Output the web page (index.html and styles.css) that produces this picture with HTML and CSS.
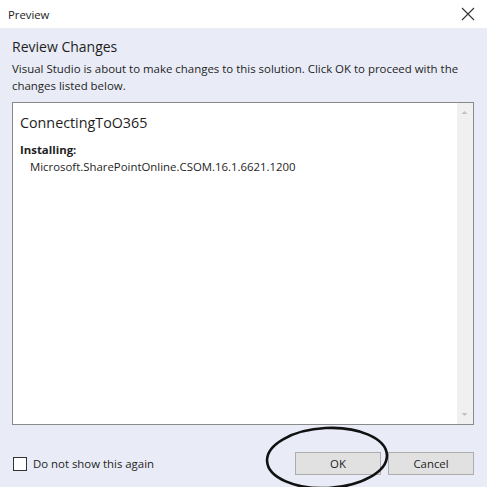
FILE: index.html
```html
<!DOCTYPE html>
<html>
<head>
<meta charset="utf-8">
<link rel="stylesheet" href="styles.css">
</head>
<body>
<div class="dialog">
  <div class="titlebar">
    <span class="title">Preview</span>
    <svg class="close" width="14" height="14" viewBox="0 0 14 14"><path d="M1 1L13 13M13 1L1 13" stroke="#333" stroke-width="1.1" fill="none"/></svg>
  </div>
  <div class="body">
    <h1 class="heading">Review Changes</h1>
    <p class="desc">Visual Studio is about to make changes to this solution. Click OK to proceed with the changes listed below.</p>
    <div class="listbox">
      <div class="content">
        <div class="project">ConnectingToO365</div>
        <div class="label">Installing:</div>
        <div class="item">Microsoft.SharePointOnline.CSOM.16.1.6621.1200</div>
      </div>
      <div class="scrollbar">
        <svg width="15" height="10" viewBox="0 0 15 10"><path d="M4.5 7L7.5 4L10.5 7Z" fill="#c2c2c2"/></svg>
        <svg width="15" height="10" viewBox="0 0 15 10"><path d="M4.5 3L7.5 6L10.5 3Z" fill="#c2c2c2"/></svg>
      </div>
    </div>
    <div class="footer">
      <label class="check"><span class="box"></span><span>Do not show this again</span></label>
      <div class="buttons">
        <button class="btn">OK</button>
        <button class="btn">Cancel</button>
      </div>
    </div>
  </div>
  <svg class="circle" width="130" height="70" viewBox="0 0 130 70"><ellipse cx="64" cy="35" rx="60" ry="30" transform="rotate(-3 64 35)" fill="none" stroke="#111" stroke-width="2.6"/></svg>
</div>
</body>
</html>
```
FILE: styles.css
```css
* { box-sizing: border-box; }
html, body { margin: 0; padding: 0; }
body {
  width: 487px;
  height: 487px;
  overflow: hidden;
  font-family: "Open Sans", "Noto Sans", sans-serif;
  color: #1e1e1e;
  background: #e9ecf6;
}
.dialog {
  position: relative;
  width: 487px;
  height: 487px;
  display: flex;
  flex-direction: column;
}
.titlebar {
  height: 28px;
  background: #ffffff;
  display: flex;
  align-items: center;
  justify-content: space-between;
  padding: 0 12px 0 8px;
}
.title { font-size: 11.3px; color: #222; }
.close { display: block; }
.body {
  flex: 1;
  display: flex;
  flex-direction: column;
  padding: 9px 13px 0 12px;
}
.heading {
  margin: 0;
  font-size: 14px;
  font-weight: 400;
  line-height: 20px;
  color: #1e1e1e;
}
.desc {
  margin: 3px 0 0 0;
  font-size: 11.45px;
  line-height: 17px;
  color: #1e1e1e;
}
.listbox {
  margin-top: 8px;
  height: 323px;
  background: #fff;
  border: 1px solid #8a8a8a;
  display: flex;
}
.content {
  flex: 1;
  padding: 10px 7px 7px;
}
.project { font-size: 14.3px; line-height: 20px; }
.label { font-size: 11.4px; font-weight: 700; margin-top: 9px; line-height: 16px; }
.item { font-size: 11.4px; line-height: 17px; padding-left: 10px; }
.scrollbar {
  width: 16px;
  background: #f0f0f0;
  display: flex;
  flex-direction: column;
  justify-content: space-between;
  padding: 4px 0;
}
.scrollbar svg { display: block; }
.footer {
  margin-top: 27px;
  display: flex;
  align-items: center;
  justify-content: space-between;
}
.check {
  display: flex;
  align-items: center;
  gap: 6px;
  font-size: 11.4px;
  margin-left: 1px;
}
.box {
  width: 14px;
  height: 14px;
  border: 1px solid #333;
  background: #fff;
}
.buttons { display: flex; gap: 7px; }
.btn {
  width: 86px;
  height: 23px;
  background: #e1e1e1;
  border: 1px solid #adadad;
  font-family: inherit;
  font-size: 11.4px;
  color: #1e1e1e;
  padding: 0;
}
.circle {
  position: absolute;
  left: 263px;
  top: 423px;
}
```
